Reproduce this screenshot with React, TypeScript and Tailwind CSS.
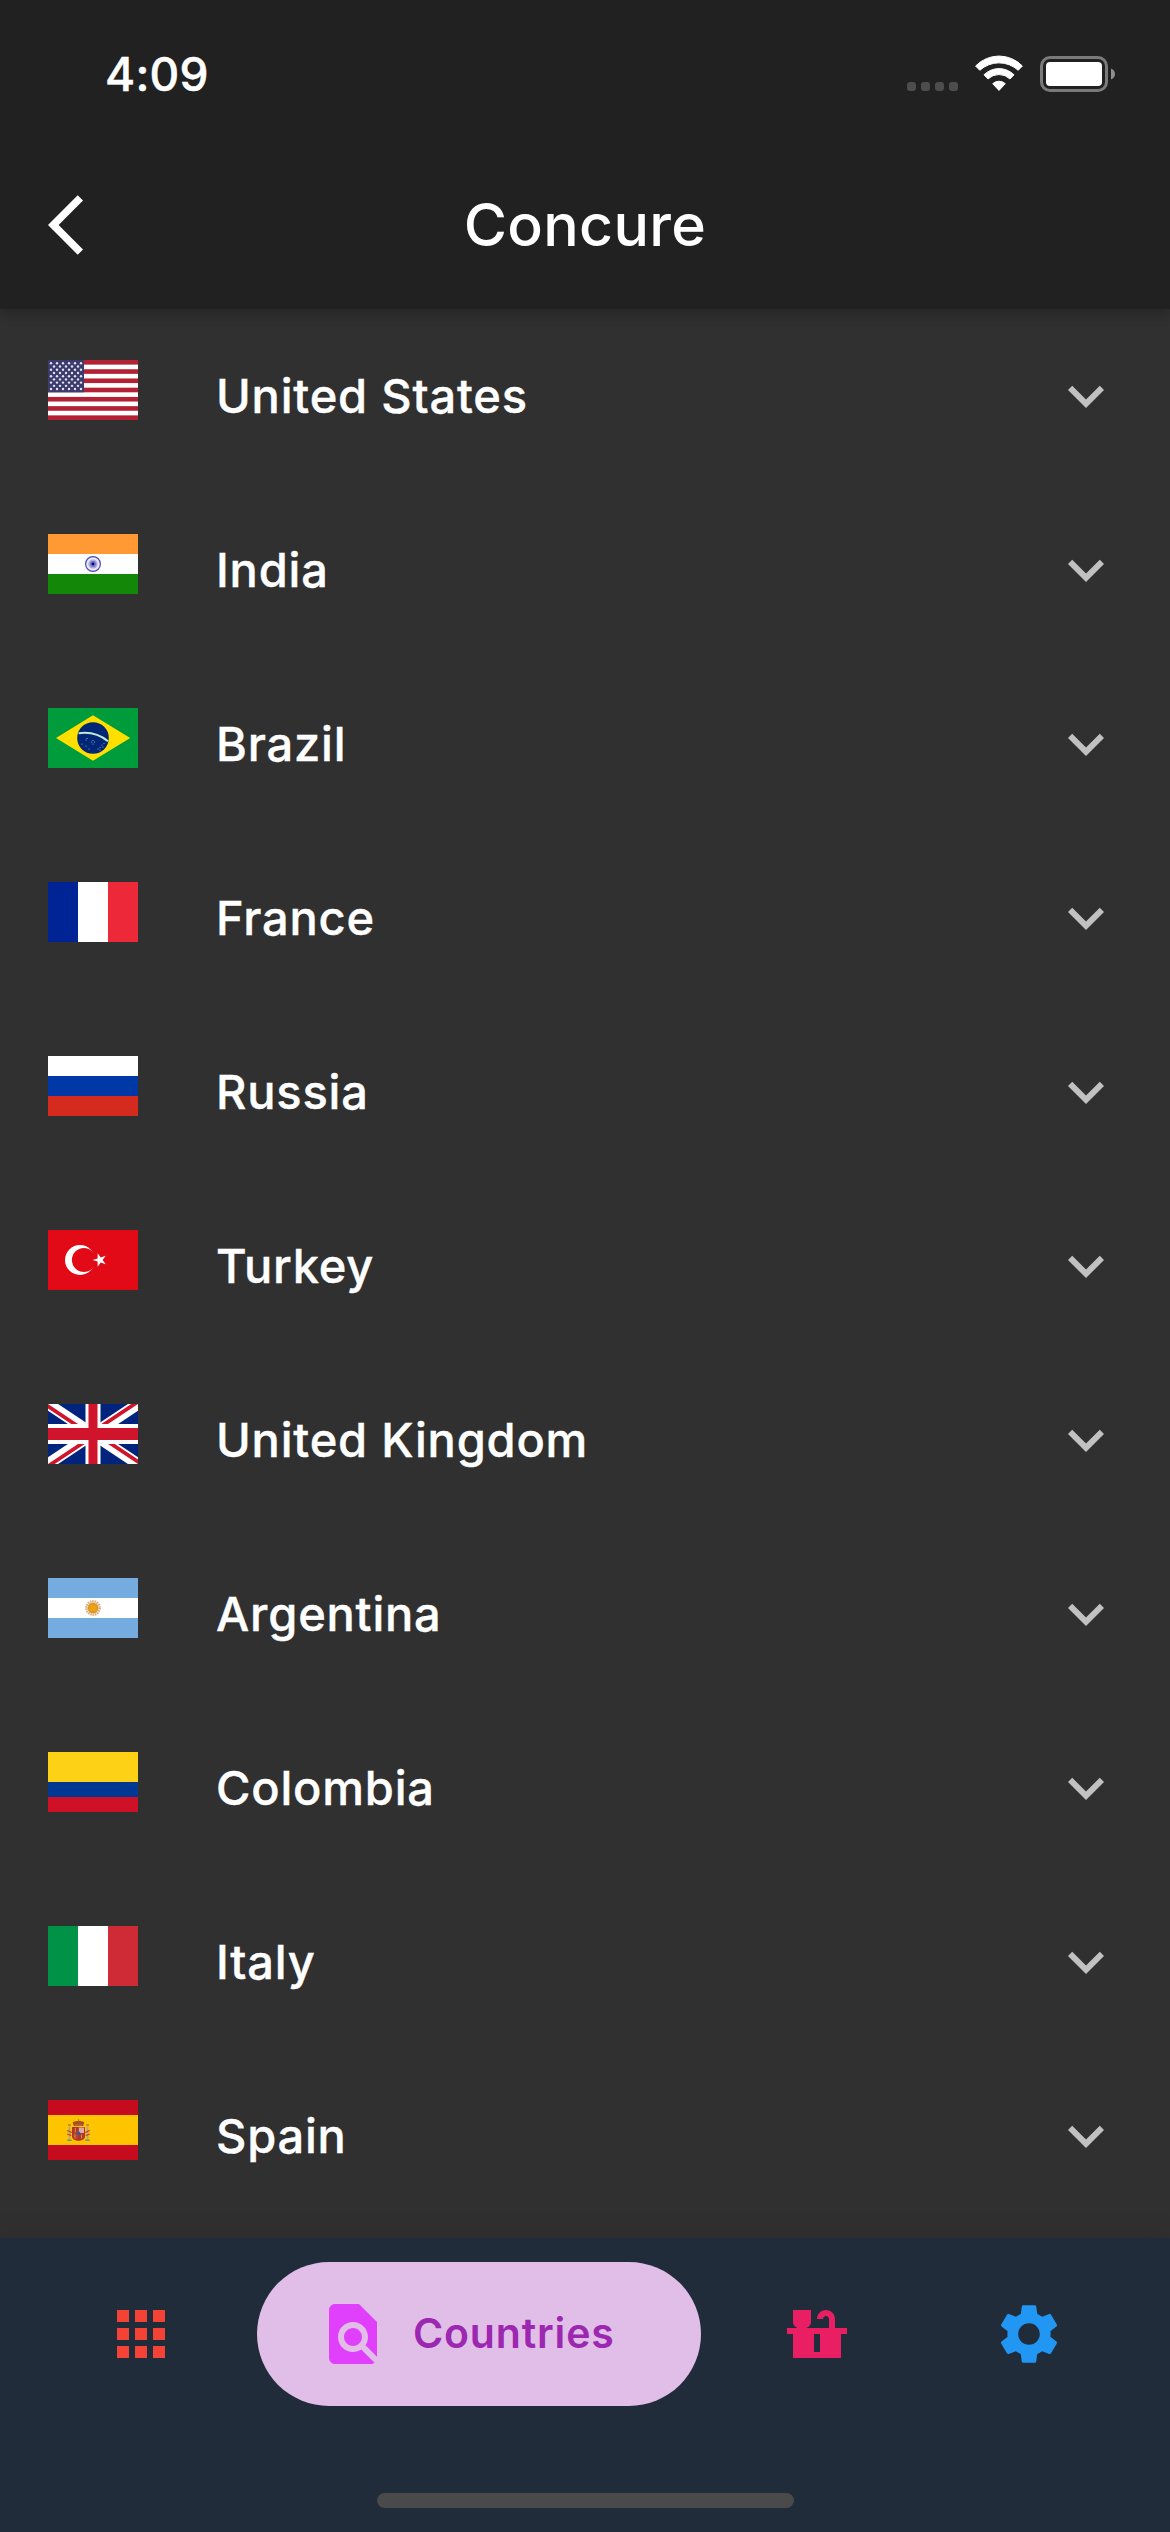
import React from "react";
import {
  MdApps,
  MdArrowBackIos,
  MdExpandMore,
  MdFindInPage,
  MdSettings,
} from "react-icons/md";

function Flag({ children, viewBox = "0 0 90 60" }: { children: React.ReactNode; viewBox?: string }) {
  return (
    <svg className="block h-[60px] w-[90px]" viewBox={viewBox} preserveAspectRatio="none">
      {children}
    </svg>
  );
}

function HorizontalBands({ bands }: { bands: [string, number][] }) {
  let y = 0;
  return (
    <>
      {bands.map(([color, h], i) => {
        const top = y;
        y += h;
        return <rect key={i} x="0" y={top} width="90" height={h} fill={color} />;
      })}
    </>
  );
}

function VerticalBands({ colors }: { colors: string[] }) {
  return (
    <>
      {colors.map((c, i) => (
        <rect key={i} x={i * 30} y="0" width="30" height="60" fill={c} />
      ))}
    </>
  );
}

function UsaFlag() {
  const stripe = 60 / 13;
  const stars: React.ReactNode[] = [];
  for (let row = 0; row < 9; row++) {
    const odd = row % 2 === 1;
    for (let col = 0; col < (odd ? 5 : 6); col++) {
      stars.push(
        <circle key={`${row}-${col}`} cx={(odd ? 6 : 3) + col * 6} cy={3.3 + row * 3.22} r="1.2" fill="#e4e4ee" />
      );
    }
  }
  return (
    <Flag>
      <rect width="90" height="60" fill="#fff" />
      {[0, 2, 4, 6, 8, 10, 12].map((i) => (
        <rect key={i} y={i * stripe} width="90" height={stripe} fill="#b22234" />
      ))}
      <rect width="36" height={stripe * 7} fill="#3c3b6e" />
      {stars}
    </Flag>
  );
}

function IndiaFlag() {
  return (
    <Flag>
      <HorizontalBands bands={[["#ff9933", 20], ["#ffffff", 20], ["#138808", 20]]} />
      <circle cx="45" cy="30" r="7.4" fill="#e9e9f7" stroke="#4a4ab8" strokeWidth="1.2" />
      <circle cx="45" cy="30" r="4.6" fill="#a9a9dc" />
      <circle cx="45" cy="30" r="3" fill="#7777c6" />
      <circle cx="45" cy="30" r="1.4" fill="#00008f" />
    </Flag>
  );
}

function BrazilFlag() {
  const stars = [
    [38, 32], [34, 36], [38, 38], [41, 41], [45, 32.5], [43.5, 34], [46.5, 34], [45, 36],
    [50, 41], [52, 39.5], [54, 37], [56, 35.5], [52, 42], [55, 39], [39, 30.5],
  ];
  return (
    <Flag>
      <rect width="90" height="60" fill="#009c3b" />
      <path d="M8 30 45 7.2 82.2 30 45 52.8z" fill="#ffdf00" />
      <circle cx="45" cy="30" r="15.8" fill="#002776" />
      <path d="M30.6 25.2C42 23.6 52 26.6 60 33.2" fill="none" stroke="#c4e8d6" strokeWidth="2.1" />
      {stars.map(([x, y], i) => (
        <circle key={i} cx={x} cy={y} r="0.5" fill="#b9c4e0" />
      ))}
    </Flag>
  );
}

function TurkeyFlag() {
  return (
    <Flag>
      <rect width="90" height="60" fill="#e30a17" />
      <circle cx="32" cy="30" r="15" fill="#fff" />
      <circle cx="35.9" cy="30" r="12" fill="#e30a17" />
      <path
        d="M44.6 30 49.6 28.4 49.7 23.2 52.7 27.4 57.7 25.8 54.6 30 57.7 34.2 52.7 32.6 49.7 36.8 49.6 31.6z"
        fill="#fff"
      />
    </Flag>
  );
}

function UkFlag() {
  return (
    <Flag viewBox="0 0 60 30">
      <clipPath id="uk-pinwheel">
        <path d="M30 15h30v15zv15H0zH0V0zV0h30z" />
      </clipPath>
      <rect width="60" height="30" fill="#00247d" />
      <path d="M0 0 60 30M60 0 0 30" stroke="#fff" strokeWidth="6" />
      <path d="M0 0 60 30M60 0 0 30" clipPath="url(#uk-pinwheel)" stroke="#cf142b" strokeWidth="4" />
      <path d="M30 0v30M0 15h60" stroke="#fff" strokeWidth="10" />
      <path d="M30 0v30M0 15h60" stroke="#cf142b" strokeWidth="6" />
    </Flag>
  );
}

function ArgentinaFlag() {
  return (
    <Flag>
      <HorizontalBands bands={[["#74acdf", 20], ["#ffffff", 20], ["#74acdf", 20]]} />
      <circle cx="45" cy="30" r="6.4" fill="none" stroke="#d9b27a" strokeWidth="3" strokeDasharray="1.5 .7" />
      <circle cx="45" cy="30" r="5.2" fill="#d9952c" />
      <circle cx="45" cy="30" r="3.6" fill="#eda30f" />
    </Flag>
  );
}

function SpainFlag() {
  return (
    <Flag>
      <HorizontalBands bands={[["#c60b1e", 15], ["#ffc400", 30], ["#c60b1e", 15]]} />
      <path d="M21.5 26.5v13M39.5 26.5v13" stroke="#b3a684" strokeWidth="1.8" />
      <path d="M19.3 30.5l4.5 2M19.3 34l4 1.5M41.7 30.5l-4.5 2M41.7 34l-4 1.5" stroke="#c0392b" strokeWidth="1.3" />
      <path d="M20 25h3M38 25h3" stroke="#a5602a" strokeWidth="1.2" />
      <path d="M19.3 40.2h4.4M37.3 40.2h4.4" stroke="#7f8f6a" strokeWidth="1.5" />
      <path d="M24.6 22.5c2-2 9.8-2 11.8 0l-1.3 3.5h-9.2z" fill="#b04a20" />
      <path d="M30.5 19.3v2.5M27 24.8h7" stroke="#9b7a3a" strokeWidth="1.3" />
      <path d="M24 27h13v9.5c0 5.6-13 5.6-13 0z" fill="#b5322a" />
      <path d="M30.8 27.5h5.2v5.5h-5.2z" fill="#dba9ac" />
      <path d="M25 33.3h5.3v5.5c-3 0-5.3-1.5-5.3-3z" fill="#b8452a" />
      <path d="M27.3 28v4.5M27 34.5v4M33.5 34.5v4" stroke="#c98f3a" strokeWidth="1.1" />
      <circle cx="30.5" cy="33.3" r="1.8" fill="#2f5c9e" />
    </Flag>
  );
}

const countries: { name: string; flag: React.ReactNode }[] = [
  { name: "United States", flag: <UsaFlag /> },
  { name: "India", flag: <IndiaFlag /> },
  { name: "Brazil", flag: <BrazilFlag /> },
  { name: "France", flag: <Flag><VerticalBands colors={["#002395", "#ffffff", "#ed2939"]} /></Flag> },
  { name: "Russia", flag: <Flag><HorizontalBands bands={[["#ffffff", 20], ["#0039a6", 20], ["#d52b1e", 20]]} /></Flag> },
  { name: "Turkey", flag: <TurkeyFlag /> },
  { name: "United Kingdom", flag: <UkFlag /> },
  { name: "Argentina", flag: <ArgentinaFlag /> },
  { name: "Colombia", flag: <Flag><HorizontalBands bands={[["#fcd116", 30], ["#003893", 15], ["#ce1126", 15]]} /></Flag> },
  { name: "Italy", flag: <Flag><VerticalBands colors={["#009246", "#ffffff", "#ce2b37"]} /></Flag> },
  { name: "Spain", flag: <SpainFlag /> },
];

function WifiIcon() {
  return (
    <svg className="block h-9 w-12" viewBox="0 0 48 36" fill="#fff" stroke="#fff" strokeWidth="1" strokeLinejoin="round">
      <path d="M.6 11A32.5 32.5 0 0 1 47.4 11L43.2 15.3A28.5 28.5 0 0 0 4.8 15.3Z" />
      <path d="M9 19.8A21.2 21.2 0 0 1 39 19.8L35 24A15.7 15.7 0 0 0 13 24Z" />
      <path d="M17.7 28.7A9.2 9.2 0 0 1 30.3 28.7L24 35.4Z" />
    </svg>
  );
}

function BatteryIcon() {
  return (
    <svg className="block h-9 w-[75px]" viewBox="0 0 75 36">
      <rect x="1.5" y="1.5" width="65" height="33" rx="8.5" fill="none" stroke="#7a7a7a" strokeWidth="3" />
      <rect x="6" y="6" width="56" height="24" rx="4" fill="#fff" />
      <path d="M71 12.5C76.3 14.5 76.3 21.5 71 23.5Z" fill="#8f8f8f" />
    </svg>
  );
}

function StatusBar() {
  return (
    <div className="flex h-[141px] items-start justify-between pr-[55px] pl-[105px]">
      <span className="mt-[45px] text-[46px] leading-[58px] font-medium tracking-[0.2px] [-webkit-text-stroke:0.5px_currentColor]">
        4:09
      </span>
      <div className="mt-[55px] flex">
        <div className="mt-[27px] mr-[17px] flex gap-[5px]">
          {[0, 1, 2, 3].map((i) => (
            <span key={i} className="size-[9px] rounded-[3px] bg-[#4d4d4d]" />
          ))}
        </div>
        <WifiIcon />
        <div className="mt-px ml-[17px]">
          <BatteryIcon />
        </div>
      </div>
    </div>
  );
}

function CountertopIcon() {
  return (
    <svg className="block size-[72px]" viewBox="0 0 24 24" fill="#e91e63">
      <path d="M22 10h-4V7c0-1.66-1.34-3-3-3s-3 1.34-3 3h2c0-.55.45-1 1-1s1 .45 1 1v3H8c1.1 0 2-.9 2-2V4H4v4c0 1.1.9 2 2 2H2v2h2v8h16v-8h2v-2zm-9 8h-2v-6h2v6z" />
    </svg>
  );
}

export default function App() {
  return (
    <div className="flex h-[2532px] w-[1170px] flex-col overflow-hidden bg-[#303030] font-['Inter','Liberation_Sans',sans-serif] text-white">
      <header className="relative z-10 h-[309px] bg-[#212121] shadow-[0_5px_12px_rgba(0,0,0,0.22)]">
        <StatusBar />
        <div className="grid h-[168px] grid-cols-[1fr_auto_1fr] items-center pl-12">
          <button aria-label="Back" className="justify-self-start">
            <MdArrowBackIos className="block size-[72px]" />
          </button>
          <h1 className="-ml-12 text-[59px] leading-[72px] font-medium tracking-[0.3px]">Concure</h1>
        </div>
      </header>

      <main className="flex-1">
        {countries.map((c) => (
          <div key={c.name} className="flex h-[174px] items-center pr-12 pl-12">
            <div className="mb-3">{c.flag}</div>
            <span className="ml-[78px] flex-1 text-[47px] leading-[60px] font-medium tracking-[0.8px] [-webkit-text-stroke:0.4px_currentColor]">
              {c.name}
            </span>
            <MdExpandMore className="size-[72px] text-[#c1c1c1]" />
          </div>
        ))}
      </main>

      <footer className="relative flex h-[294px] flex-col items-center bg-[#212c3b] shadow-[0_0_30px_rgba(0,0,0,0.1)]">
        <nav className="mt-6 flex h-36 w-full items-center pl-[105px]">
          <MdApps className="size-[72px] text-[#f44336]" />
          <div className="ml-20 flex h-36 w-[444px] items-center rounded-full bg-[#e1bee7] pl-[60px]">
            <MdFindInPage className="size-[72px] text-[#e040fb]" />
            <span className="mb-[2px] ml-6 text-[41px] leading-[54px] font-semibold tracking-[0.85px] text-[#9c27b0]">
              Countries
            </span>
          </div>
          <div className="ml-20">
            <CountertopIcon />
          </div>
          <MdSettings className="ml-[140px] size-[72px] text-[#2196f3]" />
        </nav>
        <div className="mt-[87px] h-[15px] w-[417px] rounded-full bg-[#4a4a4a]" />
      </footer>
    </div>
  );
}
